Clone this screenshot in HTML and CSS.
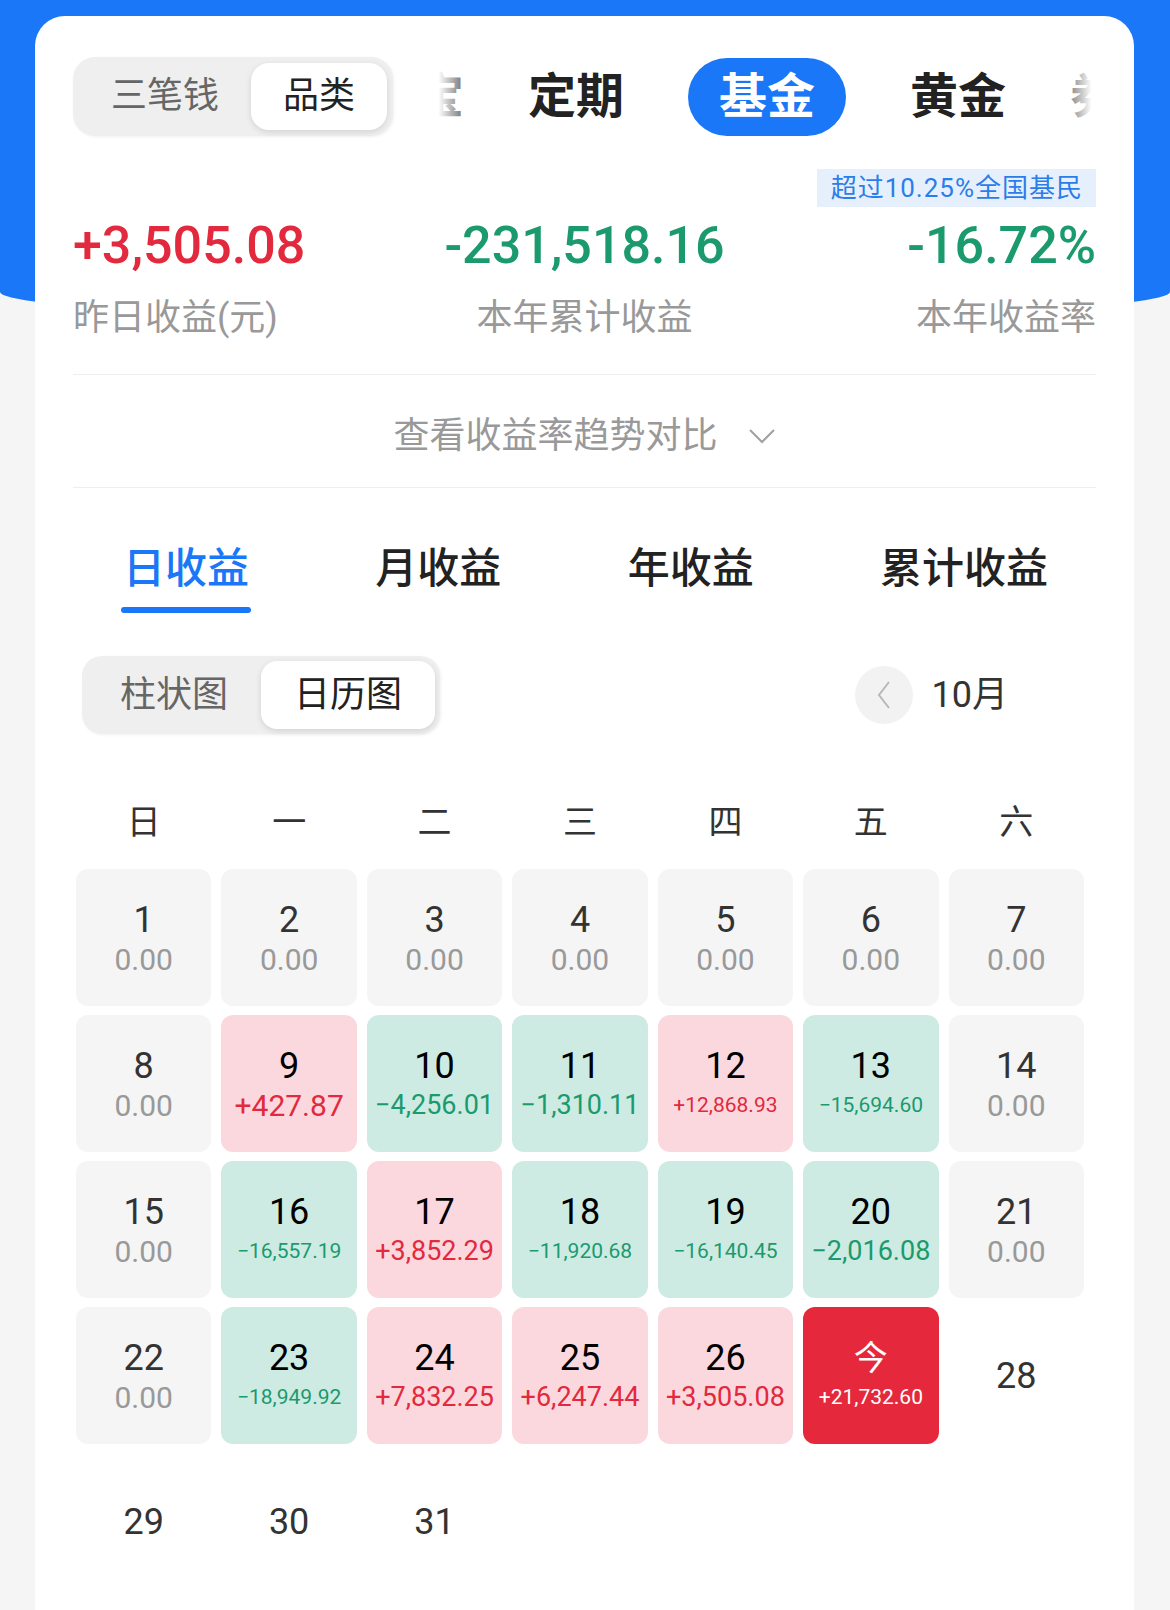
FILE: index.html
```html
<!DOCTYPE html>
<html>
<head>
  <meta charset="utf-8">
  <title>基金收益日历</title>
  <link rel="stylesheet" href="styles.css">
</head>
<body>
  <div class="hero"></div>
  <div class="card">
    <div class="top-row">
      <div class="seg">
        <span class="seg-item">三笔钱</span>
        <span class="seg-item on">品类</span>
      </div>
      <div class="cats">
        <div class="cat-list">
          <span class="cat">宝</span>
          <span class="cat">定期</span>
          <span class="cat on">基金</span>
          <span class="cat">黄金</span>
          <span class="cat">券</span>
        </div>
      </div>
    </div>

    <div class="rank-row"><span class="rank">超过10.25%全国基民</span></div>
    <div class="stat-row">
      <div class="stat">
        <div class="num up">+3,505.08</div>
        <div class="lbl">昨日收益(元)</div>
      </div>
      <div class="stat mid">
        <div class="num dn">-231,518.16</div>
        <div class="lbl">本年累计收益</div>
      </div>
      <div class="stat end">
        <div class="num dn">-16.72%</div>
        <div class="lbl">本年收益率</div>
      </div>
    </div>

    <div class="trend">
      查看收益率趋势对比
      <svg class="chev" width="28" height="16" viewBox="0 0 28 16"><polyline points="2,2 14,14 26,2" fill="none" stroke="#a0a0a0" stroke-width="2"/></svg>
    </div>

    <div class="subtabs">
      <span class="subtab on">日收益</span>
      <span class="subtab">月收益</span>
      <span class="subtab">年收益</span>
      <span class="subtab">累计收益</span>
    </div>

    <div class="tools">
      <div class="toggle">
        <span>柱状图</span>
        <span class="on">日历图</span>
      </div>
      <div class="month">
        <span class="mbtn"><svg width="16" height="30" viewBox="0 0 16 30"><polyline points="13,2 3,15 13,28" fill="none" stroke="#b8b8b8" stroke-width="2"/></svg></span>
        <span class="mlabel">10月</span>
        <span class="mbtn hide"></span>
      </div>
    </div>

    <div class="week">
      <span>日</span><span>一</span><span>二</span><span>三</span><span>四</span><span>五</span><span>六</span>
    </div>

    <div class="cal">
      <div class="day"><span class="d">1</span><span class="v">0.00</span></div>
      <div class="day"><span class="d">2</span><span class="v">0.00</span></div>
      <div class="day"><span class="d">3</span><span class="v">0.00</span></div>
      <div class="day"><span class="d">4</span><span class="v">0.00</span></div>
      <div class="day"><span class="d">5</span><span class="v">0.00</span></div>
      <div class="day"><span class="d">6</span><span class="v">0.00</span></div>
      <div class="day"><span class="d">7</span><span class="v">0.00</span></div>

      <div class="day"><span class="d">8</span><span class="v">0.00</span></div>
      <div class="day up"><span class="d">9</span><span class="v">+427.87</span></div>
      <div class="day dn"><span class="d">10</span><span class="v m">−4,256.01</span></div>
      <div class="day dn"><span class="d">11</span><span class="v m">−1,310.11</span></div>
      <div class="day up"><span class="d">12</span><span class="v s">+12,868.93</span></div>
      <div class="day dn"><span class="d">13</span><span class="v s">−15,694.60</span></div>
      <div class="day"><span class="d">14</span><span class="v">0.00</span></div>

      <div class="day"><span class="d">15</span><span class="v">0.00</span></div>
      <div class="day dn"><span class="d">16</span><span class="v s">−16,557.19</span></div>
      <div class="day up"><span class="d">17</span><span class="v m">+3,852.29</span></div>
      <div class="day dn"><span class="d">18</span><span class="v s">−11,920.68</span></div>
      <div class="day dn"><span class="d">19</span><span class="v s">−16,140.45</span></div>
      <div class="day dn"><span class="d">20</span><span class="v m">−2,016.08</span></div>
      <div class="day"><span class="d">21</span><span class="v">0.00</span></div>

      <div class="day"><span class="d">22</span><span class="v">0.00</span></div>
      <div class="day dn"><span class="d">23</span><span class="v s">−18,949.92</span></div>
      <div class="day up"><span class="d">24</span><span class="v m">+7,832.25</span></div>
      <div class="day up"><span class="d">25</span><span class="v m">+6,247.44</span></div>
      <div class="day up"><span class="d">26</span><span class="v m">+3,505.08</span></div>
      <div class="day today"><span class="d">今</span><span class="v s">+21,732.60</span></div>
      <div class="day future"><span class="d">28</span></div>

      <div class="day future"><span class="d">29</span></div>
      <div class="day future"><span class="d">30</span></div>
      <div class="day future"><span class="d">31</span></div>
    </div>
  </div>
</body>
</html>
```

FILE: styles.css
```css
html, body {
  margin: 0;
  padding: 0;
}
body {
  height: 1610px;
  overflow: hidden;
  background: #f5f5f5;
  color: #222;
  font-family: Roboto, "Noto Sans CJK SC", sans-serif;
}
.hero {
  height: 320px;
  background: #1a77f7;
  border-radius: 0 0 50% 50% / 0 0 28px 28px;
}
.card {
  margin: -304px 36px 0 35px;
  padding: 41px 38px 40px;
  min-height: 1560px;
  background: #fff;
  border-radius: 30px 30px 0 0;
}

/* top row: segment + category tabs */
.top-row {
  display: flex;
  align-items: center;
  height: 79px;
}
.seg {
  display: flex;
  padding: 6px;
  background: #efefef;
  border-radius: 22px;
  box-shadow: 1px 1px 3px rgba(0, 0, 0, 0.06);
}
.seg-item {
  padding: 0 32px;
  font-size: 36px;
  line-height: 67px;
  color: #666;
}
.seg-item.on {
  color: #222;
  background: #fff;
  border-radius: 18px;
  box-shadow: 0 2px 6px rgba(0, 0, 0, 0.12);
}
.cats {
  position: relative;
  flex: 1;
  height: 79px;
  margin-left: 41px;
  overflow: hidden;
}
.cats::before,
.cats::after {
  content: "";
  position: absolute;
  top: 0;
  bottom: 0;
  width: 44px;
  z-index: 1;
}
.cats::before {
  left: 0;
  background: linear-gradient(to right, #fff 10%, rgba(255, 255, 255, 0));
}
.cats::after {
  right: 0;
  background: linear-gradient(to left, #fff 10%, rgba(255, 255, 255, 0));
}
.cat-list {
  display: flex;
  align-items: center;
  gap: 64px;
  height: 100%;
  margin-left: -18px;
  white-space: nowrap;
}
.cat {
  flex-shrink: 0;
  font-size: 48px;
  font-weight: 700;
  line-height: 78px;
  color: #222;
}
.cat.on {
  padding: 0 31px;
  color: #fff;
  background: #1a77f7;
  border-radius: 39px;
}

/* summary */
.rank-row {
  display: flex;
  justify-content: flex-end;
  margin-top: 33px;
}
.rank {
  padding: 0 13px 0 14px;
  font-size: 26px;
  line-height: 38px;
  letter-spacing: 1px;
  color: #2b7de9;
  background: #e6f0fd;
}
.stat-row {
  display: grid;
  grid-template-columns: 1fr auto 1fr;
  margin-top: 9px;
}
.stat.mid { text-align: center; }
.stat.end { text-align: right; }
.num {
  font-size: 52px;
  font-weight: 500;
  line-height: 60px;
}
.num.up { color: #e2293d; }
.num.dn { color: #1b9a6d; }
.lbl {
  margin-top: 18px;
  font-size: 36px;
  line-height: 48px;
  color: #999;
}

.trend {
  display: flex;
  justify-content: center;
  align-items: center;
  margin-top: 32px;
  padding: 37px 0 27px;
  border-top: 1px solid #eee;
  border-bottom: 1px solid #eee;
  font-size: 36px;
  line-height: 48px;
  color: #999;
}
.chev { margin-left: 30px; }

/* day / month / year tabs */
.subtabs {
  display: flex;
  justify-content: space-between;
  align-items: flex-start;
  padding: 56px 48px 0 50px;
}
.subtab {
  display: flex;
  flex-direction: column;
  align-items: center;
  font-size: 42px;
  font-weight: 500;
  line-height: 50px;
  color: #222;
}
.subtab.on { color: #1a77f7; }
.subtab.on::after {
  content: "";
  width: calc(100% + 4px);
  height: 6px;
  margin-top: 13px;
  border-radius: 3px;
  background: #1a77f7;
}

.tools {
  display: flex;
  justify-content: space-between;
  align-items: center;
  margin-top: 43px;
}
.toggle {
  display: flex;
  margin-left: 9px;
  padding: 5px;
  background: #efefef;
  border-radius: 20px;
  box-shadow: 1px 1px 3px rgba(0, 0, 0, 0.06);
}
.toggle span {
  padding: 0 33px;
  font-size: 36px;
  line-height: 68px;
  color: #666;
}
.toggle .on {
  color: #222;
  background: #fff;
  border-radius: 16px;
  box-shadow: 0 2px 6px rgba(0, 0, 0, 0.12);
}
.month {
  display: flex;
  align-items: center;
  gap: 19px;
  margin-right: 11px;
}
.mbtn {
  display: flex;
  align-items: center;
  justify-content: center;
  width: 58px;
  height: 58px;
  border-radius: 50%;
  background: #f2f2f2;
}
.mbtn.hide { visibility: hidden; }
.mlabel {
  font-size: 36px;
  line-height: 48px;
  color: #333;
}

/* calendar */
.week {
  display: grid;
  grid-template-columns: repeat(7, 1fr);
  column-gap: 10px;
  margin: 63px 12px 0 3px;
  text-align: center;
  font-size: 34px;
  line-height: 50px;
  color: #333;
}
.cal {
  display: grid;
  grid-template-columns: repeat(7, 1fr);
  grid-auto-rows: 137px;
  gap: 9px 10px;
  margin: 22px 12px 0 3px;
}
.day {
  display: flex;
  flex-direction: column;
  align-items: center;
  justify-content: center;
  background: #f5f5f5;
  border-radius: 12px;
}
.day .d {
  font-size: 36px;
  line-height: 44px;
  color: #333;
}
.day .v {
  font-size: 30px;
  line-height: 35px;
  color: #999;
  white-space: nowrap;
}
.day .v.m { font-size: 27px; }
.day .v.s { font-size: 21px; }
.day.up { background: #fbd8dd; }
.day.dn { background: #cdebe3; }
.day.up .d,
.day.dn .d { color: #000; }
.day.up .v { color: #e2293d; }
.day.dn .v { color: #1b9a6d; }
.day.today { background: #e5283c; }
.day.today .d {
  font-size: 34px;
  color: #fff;
}
.day.today .v { color: #fff; }
.day.future { background: none; }
```
